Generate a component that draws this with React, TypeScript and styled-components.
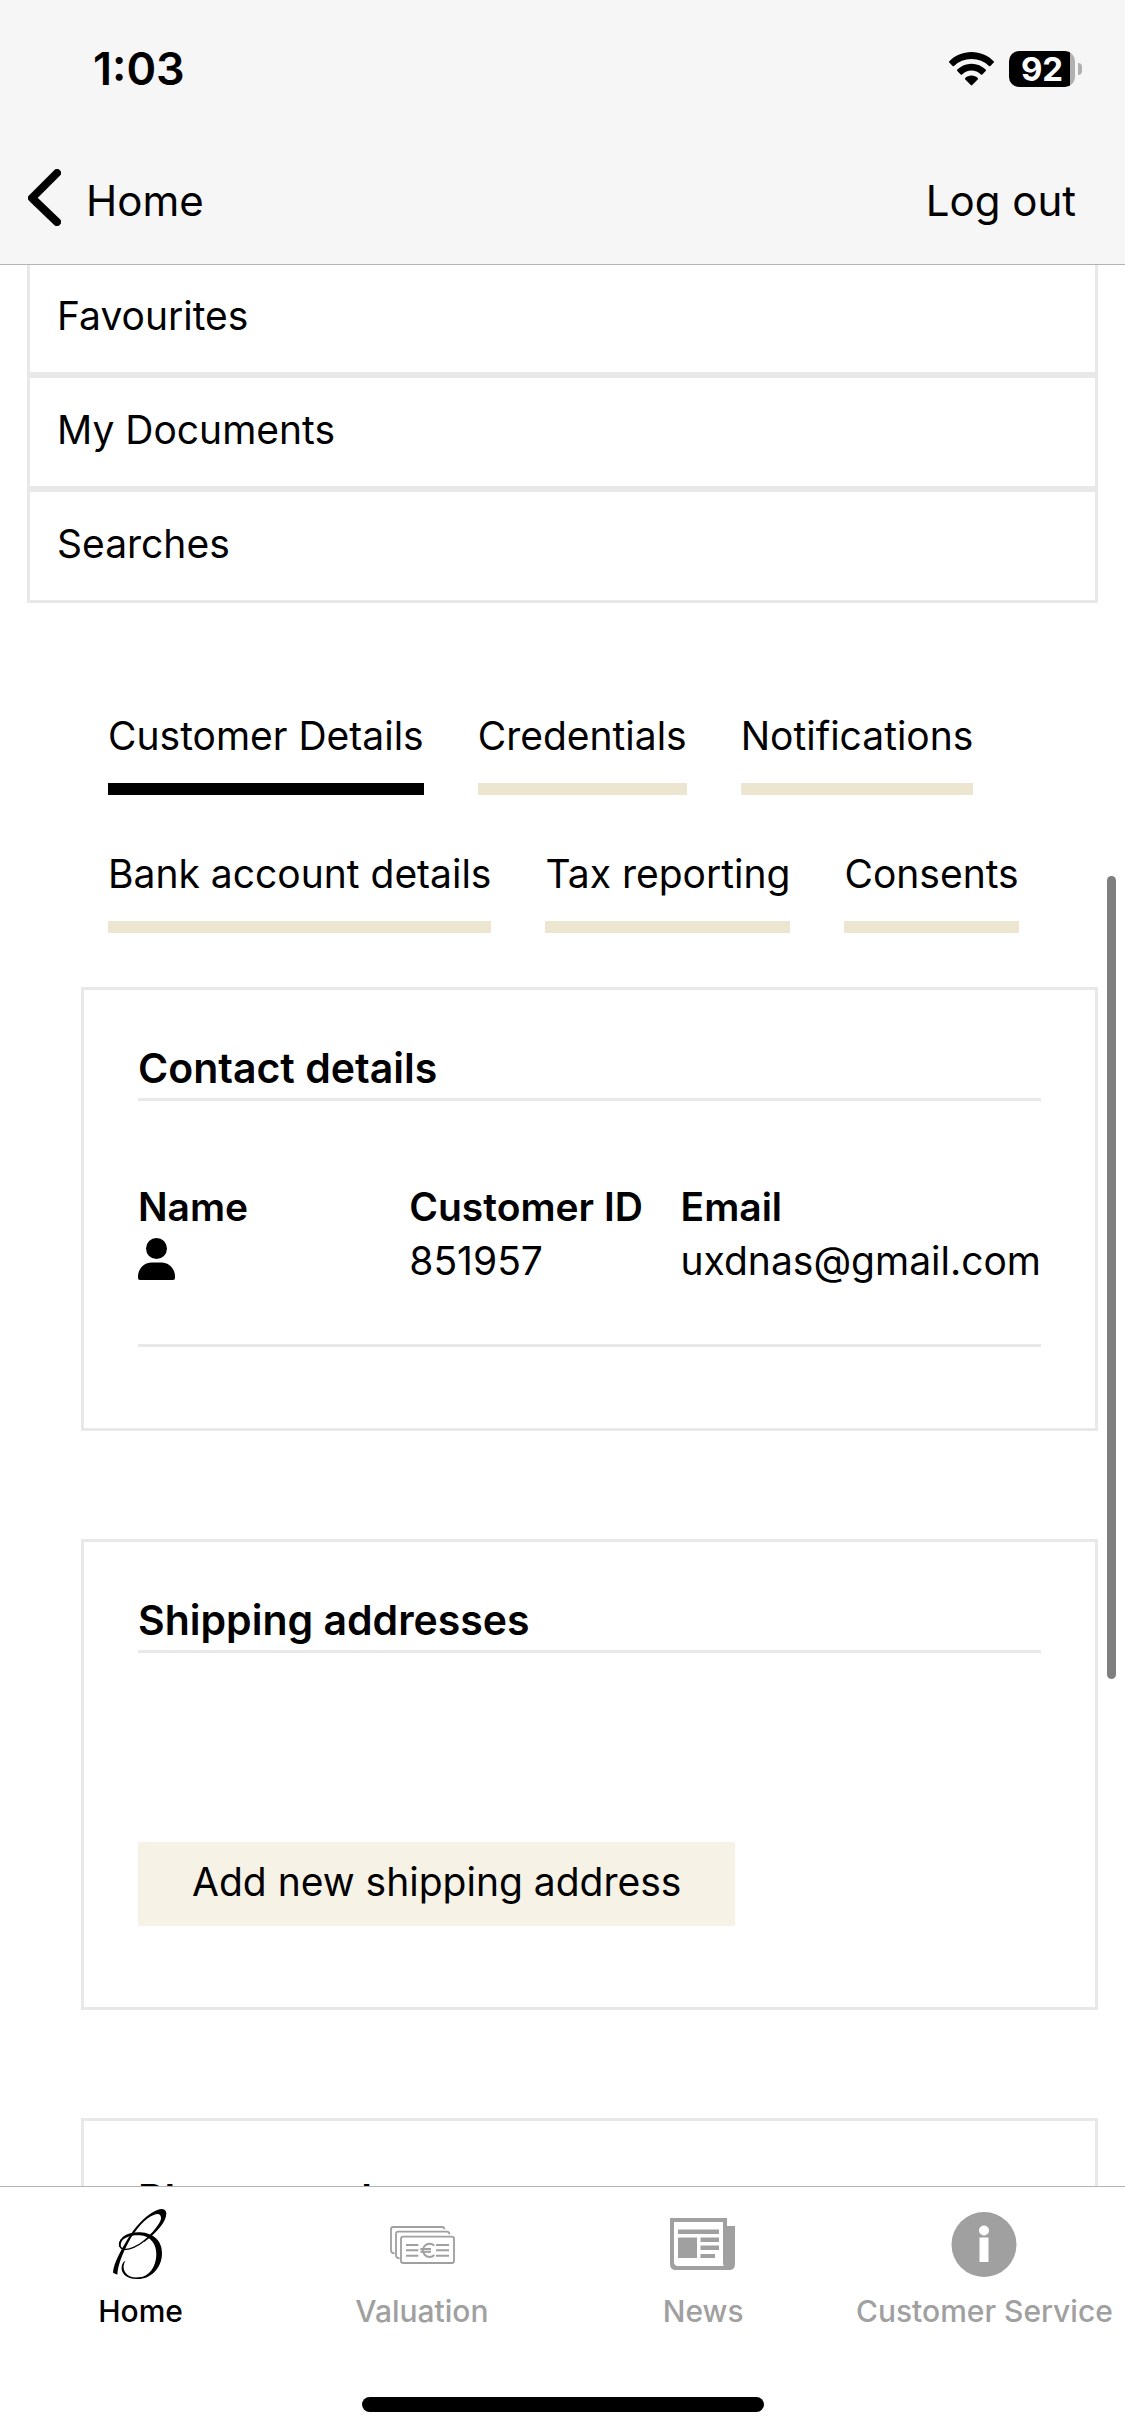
import React, { useState } from "react";
import styled, { createGlobalStyle } from "styled-components";

const line = "#e8e8e8";
const sand = "#ece6d0";
const muted = "#a0a0a0";

const GlobalStyle = createGlobalStyle`
  *, *::before, *::after { box-sizing: border-box; }
  body {
    margin: 0;
    background: #fff;
    color: #000;
    font-family: Inter, "Liberation Sans", sans-serif;
    font-size: 39px;
    line-height: 54px;
  }
  button { font: inherit; color: inherit; border: 0; background: none; padding: 0; cursor: pointer; }
  a { color: inherit; text-decoration: none; }
  ul, dl, dd, h2 { margin: 0; padding: 0; list-style: none; }
  svg { display: block; flex: none; }
`;

const Screen = styled.div`
  display: flex;
  flex-direction: column;
  height: 100vh;
`;

const Header = styled.header`
  flex: none;
  background: #f6f6f6;
  border-bottom: 1px solid #b3b3b3;
`;

const StatusBar = styled.div`
  display: flex;
  align-items: center;
  justify-content: space-between;
  padding: 42px 43px 0 93px;
`;

const Clock = styled.time`
  font-size: 45px;
  font-weight: 600;
`;

const StatusIcons = styled.div`
  display: flex;
  align-items: center;
  gap: 15px;
`;

const Battery = styled.div`
  display: flex;
  align-items: center;
  gap: 3px;
  &::after {
    content: "";
    width: 4px;
    height: 12px;
    border-radius: 0 6px 6px 0;
    background: #b0b0b0;
  }
`;

const BatteryLevel = styled.span`
  width: 66px;
  height: 36px;
  border-radius: 10px;
  background: linear-gradient(to right, #000 92%, #b0b0b0 92%);
  color: #fff;
  font-size: 33px;
  font-weight: 700;
  line-height: 36px;
  text-align: center;
`;

const NavBar = styled.nav`
  display: flex;
  justify-content: space-between;
  align-items: flex-end;
  padding: 73px 49px 36px 28px;
  font-size: 42px;
`;

const BackButton = styled.button`
  display: flex;
  align-items: flex-end;
  gap: 25px;
  height: 59px;
  svg { align-self: flex-start; }
`;

const Body = styled.div`
  position: relative;
  flex: 1;
  min-height: 0;
`;

const ScrollArea = styled.main`
  height: 100%;
  overflow-y: auto;
  scrollbar-width: none;
  padding: 0 27px;
`;

const ScrollThumb = styled.div`
  position: absolute;
  top: 611px;
  right: 9px;
  width: 9px;
  height: 803px;
  border-radius: 5px;
  background: #7f7f7f;
`;

const Menu = styled.ul`
  margin-top: -4px;
`;

const MenuLink = styled.a`
  display: block;
  border: 3px solid ${line};
  padding: 25px 27px 29px;
`;

const Details = styled.section`
  margin-left: 54px;
  padding: 106px 0 108px;
`;

const Tabs = styled.div`
  display: flex;
  flex-wrap: wrap;
  gap: 52px 54px;
  padding: 0 27px 54px;
`;

const Tab = styled.button<{ $active: boolean }>`
  padding-bottom: 20px;
  border-bottom: 12px solid ${(p) => (p.$active ? "#000" : sand)};
`;

const Panels = styled.div`
  display: flex;
  flex-direction: column;
  gap: 108px;
`;

const Panel = styled.section`
  border: 3px solid ${line};
  padding: 51px 54px 81px;
`;

const PanelTitle = styled.h2`
  border-bottom: 3px solid ${line};
  padding-bottom: 3px;
  font-size: 41px;
  font-weight: 600;
`;

const Facts = styled.dl`
  display: grid;
  grid-template-columns: 1fr 1fr auto;
  border-bottom: 3px solid ${line};
  padding: 79px 0 56px;
`;

const Term = styled.dt`
  font-weight: 600;
`;

const PersonSlot = styled.dd`
  padding-top: 4px;
`;

const AddButton = styled.button`
  display: block;
  margin-top: 189px;
  padding: 13px 54px 17px;
  background: #f7f2e6;
`;

const TabBar = styled.footer`
  flex: none;
  display: flex;
  flex-direction: column;
  align-items: center;
  gap: 68px;
  padding-bottom: 24px;
  border-top: 1px solid #b3b3b3;
  background: #fff;
`;

const TabBarItems = styled.nav`
  display: flex;
  align-self: stretch;
`;

const TabBarLink = styled.a<{ $active?: boolean }>`
  flex: 1 1 0;
  display: flex;
  flex-direction: column;
  align-items: center;
  gap: 13px;
  padding-top: 21px;
  color: ${(p) => (p.$active ? "#000" : muted)};
  font-size: 30px;
  font-weight: 500;
  line-height: 36px;
  white-space: nowrap;
`;

const HomeIndicator = styled.div`
  width: 402px;
  height: 15px;
  border-radius: 8px;
  background: #000;
`;

const ChevronIcon = () => (
  <svg width="33" height="57" viewBox="0 0 33 57" fill="none" stroke="#000" strokeWidth="8" strokeLinecap="round" strokeLinejoin="round" aria-hidden="true">
    <path d="M29 4 L4 29 L29 53" />
  </svg>
);

const WifiIcon = () => (
  <svg width="45" height="35" viewBox="0 0 45 35" aria-hidden="true">
    <path d="M22.5 0C13.8 0 6 3.5 .3 9.2a1 1 0 0 0 0 1.4l3.3 3.3a1 1 0 0 0 1.4 0A25 25 0 0 1 22.5 7 25 25 0 0 1 40 13.9a1 1 0 0 0 1.4 0l3.3-3.3a1 1 0 0 0 0-1.4C39 3.5 31.2 0 22.5 0Z" />
    <path d="M22.5 11.8c-5.5 0-10.5 2.2-14.2 5.8a1 1 0 0 0 0 1.4l3.4 3.4a1 1 0 0 0 1.4 0 13.5 13.5 0 0 1 18.8 0 1 1 0 0 0 1.4 0l3.4-3.4a1 1 0 0 0 0-1.4c-3.7-3.6-8.7-5.8-14.2-5.8Z" />
    <path d="M22.5 23.6c-2.3 0-4.5.9-6.2 2.3a1 1 0 0 0 0 1.5l5.5 5.7a1 1 0 0 0 1.4 0l5.5-5.7a1 1 0 0 0 0-1.5c-1.7-1.4-3.9-2.3-6.2-2.3Z" />
  </svg>
);

const PersonIcon = () => (
  <svg width="37" height="42" viewBox="0 0 37 42" role="img" aria-label="Personal customer">
    <circle cx="18.5" cy="10.5" r="10.5" />
    <path d="M0 38.5C0 31 6 24.5 13.5 24.5h10C31 24.5 37 31 37 38.5V40a2 2 0 0 1-2 2H2a2 2 0 0 1-2-2Z" />
  </svg>
);

const LogoIcon = () => (
  <svg width="72" height="72" viewBox="44 36 216 216" fill="currentColor" aria-hidden="true">
    <path d="M68 230L81 236C82 207 98 170 115 138C134 102 165 65 192 56C206 51 213 57 212 68C209 82 190 108 157 136L162 138C201 108 228 78 228 52C228 40 215 36 203 41C175 49 140 86 120 116C98 151 69 200 68 230Z" />
    <path d="M160 136C142 151 117 162 103 160C86 158 84 143 93 131" fill="none" stroke="currentColor" strokeWidth="4" />
    <path d="M86 152C84 141 90 129 100 121C113 111 131 108 150 109C190 111 216 136 215 173C214 216 182 249 142 249C108 250 91 231 94 212C95 202 100 196 105 195C98 206 98 220 106 231C114 242 130 246 146 244C177 241 197 212 198 176C199 144 180 120 148 118C126 117 107 122 97 132C92 138 90 145 91 153Z" />
  </svg>
);

const ValuationIcon = () => (
  <svg width="72" height="72" viewBox="18 -21 216 216" fill="none" stroke="currentColor" strokeWidth="5.5" aria-hidden="true">
    <path d="M44 115Q33 115 33 106V43Q33 36 40 36H186Q193 36 193 43" />
    <path d="M59 130Q48 130 48 121V57Q48 50 55 50H201Q208 50 208 58" />
    <rect x="63" y="65" width="159" height="79" rx="7" />
    <path d="M78 90H115M78 106H115M78 122H115M168 90H207M168 106H207M168 122H207" strokeWidth="6" />
    <path d="M163 92A20 20 0 1 0 163 120M121 102H153M121 110H153" strokeWidth="6" />
  </svg>
);

const NewsIcon = () => (
  <svg width="72" height="72" viewBox="0 0 72 72" fill="currentColor" aria-hidden="true">
    <path fillRule="evenodd" d="M3 10H60V18H68V56Q68 62 62 62H9Q3 62 3 56ZM7 14V54Q7 58 11 58H57Q56 57 56 54V14Z" />
    <path d="M11 21.5H52V26H11ZM11 29.5H30V50H11ZM33.5 29.5H52V34H33.5ZM33.5 37.5H52V42H33.5ZM33.5 46H48V50H33.5Z" />
  </svg>
);

const InfoIcon = () => (
  <svg width="72" height="72" viewBox="0 0 72 72" aria-hidden="true">
    <circle cx="36" cy="36.5" r="32.5" fill="currentColor" />
    <circle cx="36" cy="22.5" r="5" fill="#fff" />
    <path d="M31.5 29.5H40.5V54H31.5Z" fill="#fff" />
  </svg>
);

const menuItems = ["Favourites", "My Documents", "Searches"];
const tabs = ["Customer Details", "Credentials", "Notifications", "Bank account details", "Tax reporting", "Consents"];
const destinations = [
  { label: "Home", Icon: LogoIcon },
  { label: "Valuation", Icon: ValuationIcon },
  { label: "News", Icon: NewsIcon },
  { label: "Customer Service", Icon: InfoIcon },
];

export default function App() {
  const [activeTab, setActiveTab] = useState(tabs[0]);

  return (
    <Screen>
      <GlobalStyle />
      <Header>
        <StatusBar>
          <Clock>1:03</Clock>
          <StatusIcons>
            <WifiIcon />
            <Battery>
              <BatteryLevel>92</BatteryLevel>
            </Battery>
          </StatusIcons>
        </StatusBar>
        <NavBar>
          <BackButton>
            <ChevronIcon />
            Home
          </BackButton>
          <button>Log out</button>
        </NavBar>
      </Header>

      <Body>
        <ScrollArea>
          <Menu>
            {menuItems.map((item) => (
              <li key={item}>
                <MenuLink href="#">{item}</MenuLink>
              </li>
            ))}
          </Menu>
          <Details>
            <Tabs role="tablist">
              {tabs.map((tab) => (
                <Tab
                  key={tab}
                  role="tab"
                  aria-selected={tab === activeTab}
                  $active={tab === activeTab}
                  onClick={() => setActiveTab(tab)}
                >
                  {tab}
                </Tab>
              ))}
            </Tabs>
            <Panels>
              <Panel>
                <PanelTitle>Contact details</PanelTitle>
                <Facts>
                  <div>
                    <Term>Name</Term>
                    <PersonSlot>
                      <PersonIcon />
                    </PersonSlot>
                  </div>
                  <div>
                    <Term>Customer ID</Term>
                    <dd>851957</dd>
                  </div>
                  <div>
                    <Term>Email</Term>
                    <dd>uxdnas@gmail.com</dd>
                  </div>
                </Facts>
              </Panel>
              <Panel>
                <PanelTitle>Shipping addresses</PanelTitle>
                <AddButton>Add new shipping address</AddButton>
              </Panel>
              <Panel>
                <PanelTitle>Phone numbers</PanelTitle>
              </Panel>
            </Panels>
          </Details>
        </ScrollArea>
        <ScrollThumb />
      </Body>

      <TabBar>
        <TabBarItems>
          {destinations.map(({ label, Icon }) => (
            <TabBarLink key={label} href="#" $active={label === "Home"}>
              <Icon />
              {label}
            </TabBarLink>
          ))}
        </TabBarItems>
        <HomeIndicator />
      </TabBar>
    </Screen>
  );
}
